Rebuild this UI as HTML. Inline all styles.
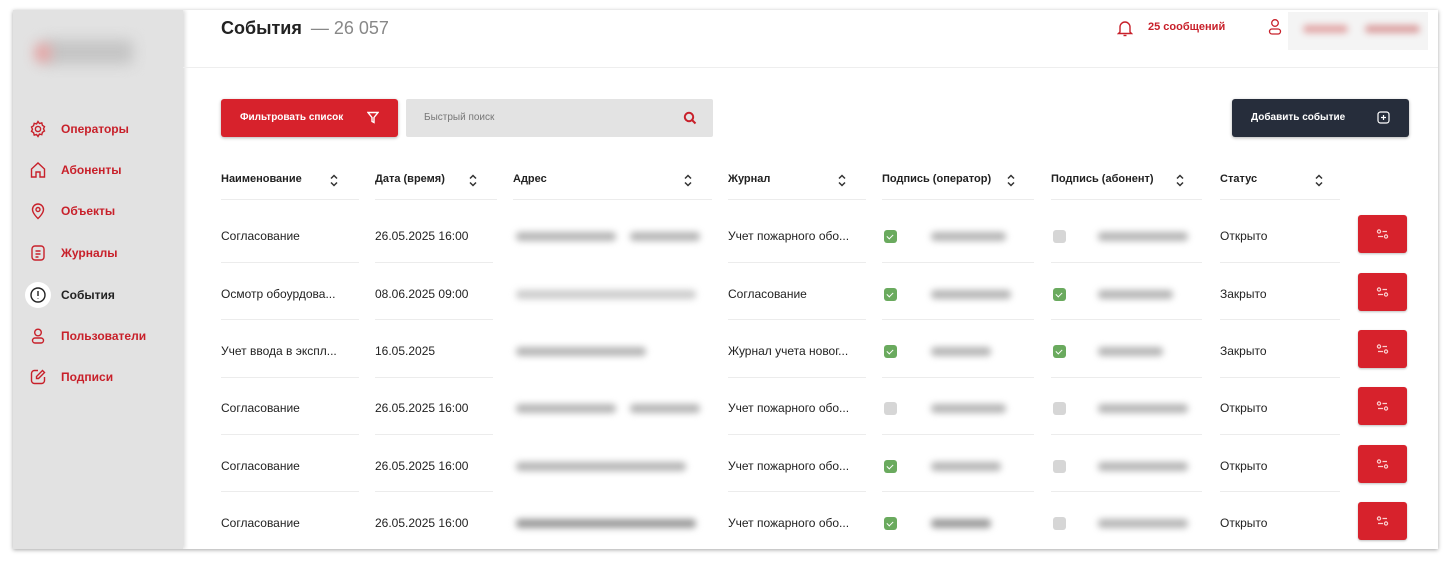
<!DOCTYPE html>
<html><head><meta charset="utf-8"><style>
*{margin:0;padding:0;box-sizing:border-box}
body{width:1453px;height:564px;background:#fff;font-family:"Liberation Sans","Noto Sans CJK SC",sans-serif;position:relative;overflow:hidden;color:#222}
.frame{position:absolute;left:13px;top:10px;width:1425px;height:539px;background:#fff;box-shadow:0 1px 4px rgba(0,0,0,.35);overflow:hidden}
.side{position:absolute;left:0;top:0;width:170px;height:539px;background:#e2e2e2;box-shadow:2px 0 4px rgba(0,0,0,.15)}
.a{position:absolute}
.blur{position:absolute;background:#b5b5b5;filter:blur(3.5px);border-radius:4px;height:9px}
.nav{position:absolute;left:16px;font-size:12px;font-weight:bold;color:#c8202a;display:flex;align-items:center}
.nav svg{width:18px;height:18px;margin-right:14px}
.th{position:absolute;top:163px;font-size:11px;font-weight:bold;color:#222;border-bottom:1.5px solid #ececec;height:27px;}
.td{position:absolute;font-size:12px;color:#222;white-space:nowrap}
.ln{position:absolute;height:1px;background:#ececec}
.cb{position:absolute;width:13px;height:13px;border-radius:3px}
.g{background:#6aaa5e}.x{background:#d6d6d6}
.g:after{content:"";position:absolute;left:4px;top:2.5px;width:3px;height:5px;border:solid #fff;border-width:0 1.5px 1.5px 0;transform:rotate(45deg)}
.btn{position:absolute;left:1345px;width:49px;height:38px;background:#d7222c;border-radius:3px;box-shadow:0 1px 2px rgba(0,0,0,.25)}
</style></head><body>
<div class="frame">
<div class="side">
<div class="blur" style="left:30px;top:30px;width:90px;height:24px;background:#c4c4c4;filter:blur(7px)"></div>
<div class="blur" style="left:22px;top:34px;width:16px;height:18px;background:#e6a5a5;filter:blur(6px)"></div>
<div class="nav" style="top:110px"><svg viewBox="0 0 18 18" fill="none" stroke="#c8202a" stroke-width="1.4"><circle cx="9" cy="9" r="2.6"/><path d="M9 1.5l1.4 2 2.4-.6.6 2.4 2.1 1.3-1 2.2 1 2.2-2.1 1.3-.6 2.4-2.4-.6L9 16.5l-1.4-2-2.4.6-.6-2.4-2.1-1.3 1-2.2-1-2.2 2.1-1.3.6-2.4 2.4.6z"/></svg>Операторы</div>
<div class="nav" style="top:151px"><svg viewBox="0 0 18 18" fill="none" stroke="#c8202a" stroke-width="1.4"><path d="M2.5 16V8L9 2l6.5 6v8h-4.5v-5h-4v5z"/></svg>Абоненты</div>
<div class="nav" style="top:192px"><svg viewBox="0 0 18 18" fill="none" stroke="#c8202a" stroke-width="1.4"><path d="M9 16.5s-5.5-5-5.5-9a5.5 5.5 0 0111 0c0 4-5.5 9-5.5 9z"/><circle cx="9" cy="7.5" r="2"/></svg>Объекты</div>
<div class="nav" style="top:234px"><svg viewBox="0 0 18 18" fill="none" stroke="#c8202a" stroke-width="1.4"><rect x="3" y="2" width="12" height="14" rx="3"/><path d="M6.5 7h5M6.5 10h5M6.5 13h3"/></svg>Журналы</div>
<div style="position:absolute;left:12px;top:272px;width:26px;height:26px;border-radius:50%;background:#fff"></div>
<div class="nav" style="top:276px;color:#222"><svg viewBox="0 0 18 18" fill="none" stroke="#222" stroke-width="1.4"><circle cx="9" cy="9" r="7"/><path d="M9 5v5M9 12.2v.6"/></svg>События</div>
<div class="nav" style="top:317px"><svg viewBox="0 0 18 18" fill="none" stroke="#c8202a" stroke-width="1.4"><circle cx="9" cy="5.5" r="3.3"/><rect x="3.5" y="11" width="11" height="5" rx="2.5"/></svg>Пользователи</div>
<div class="nav" style="top:358px"><svg viewBox="0 0 18 18" fill="none" stroke="#c8202a" stroke-width="1.4"><path d="M9 2.5H5.5a3 3 0 00-3 3v7a3 3 0 003 3h7a3 3 0 003-3V9"/><path d="M13.5 2.5l2 2-6 6H7.5v-2z"/></svg>Подписи</div>
</div>

<div class="a" style="left:208px;top:8px;font-size:18px;font-weight:bold;color:#222">События <span style="font-weight:normal;color:#888;margin-left:4px">— 26 057</span></div>
<svg class="a" style="left:1104px;top:9px" width="16" height="18" viewBox="0 0 16 18" fill="none" stroke="#c8202a" stroke-width="1.4"><path d="M3 13V8a5 5 0 0110 0v5l1.5 1.5h-13z"/><path d="M6.5 16.5h3"/></svg>
<div class="a" style="left:1135px;top:11px;font-size:11px;font-weight:bold;color:#c8202a">25 сообщений</div>
<svg class="a" style="left:1255px;top:8px" width="14" height="18" viewBox="0 0 14 18" fill="none" stroke="#c8202a" stroke-width="1.3"><circle cx="7" cy="5" r="3.3"/><rect x="1.5" y="11" width="11" height="5" rx="2.5"/></svg>
<div class="a" style="left:1275px;top:2px;width:140px;height:38px;background:#f4f4f4"></div>
<div class="blur" style="left:1290px;top:15px;width:45px;height:8px;background:#e2a7a7"></div>
<div class="blur" style="left:1352px;top:15px;width:55px;height:8px;background:#dba0a0"></div>
<div class="a" style="left:170px;top:57px;width:1255px;height:1px;background:#eee"></div>

<div class="a" style="left:208px;top:89px;width:177px;height:38px;background:#d7222c;border-radius:3px;box-shadow:0 1px 3px rgba(0,0,0,.3);color:#fff;font-size:10px;font-weight:bold;padding:13px 0 0 19px">Фильтровать список
<svg style="position:absolute;left:146px;top:12px" width="12" height="13" viewBox="0 0 12 13" fill="none" stroke="#fff" stroke-width="1.4"><path d="M1 1.5h10L7 6.5v5L5 10.5v-4z"/></svg></div>
<div class="a" style="left:393px;top:89px;width:307px;height:38px;background:#e3e3e3;border-radius:2px;font-size:10px;color:#777;padding:13px 0 0 18px">Быстрый поиск
<svg style="position:absolute;left:277px;top:12px" width="14" height="14" viewBox="0 0 14 14" fill="none" stroke="#c8202a" stroke-width="2"><circle cx="6" cy="6" r="4.2"/><path d="M9 9l3.5 3.5"/></svg></div>
<div class="a" style="left:1219px;top:89px;width:177px;height:38px;background:#262d3b;border-radius:3px;box-shadow:0 1px 3px rgba(0,0,0,.3);color:#fff;font-size:10px;font-weight:bold;padding:13px 0 0 19px">Добавить событие
<svg style="position:absolute;left:145px;top:12px" width="13" height="13" viewBox="0 0 13 13" fill="none" stroke="#fff" stroke-width="1.2"><rect x="1" y="1" width="11" height="11" rx="2.5"/><path d="M6.5 4v5M4 6.5h5"/></svg></div>

<div class="th" style="left:208px;width:138px">Наименование</div>
<div class="th" style="left:362px;width:122px">Дата (время)</div>
<div class="th" style="left:500px;width:199px">Адрес</div>
<div class="th" style="left:715px;width:138px">Журнал</div>
<div class="th" style="left:869px;width:152px">Подпись (оператор)</div>
<div class="th" style="left:1038px;width:151px">Подпись (абонент)</div>
<div class="th" style="left:1207px;width:120px">Статус</div>
<svg class="a" style="left:317px;top:164px" width="8" height="13" viewBox="0 0 8 13" fill="none" stroke="#333" stroke-width="1.5"><path d="M1 4.5l3-3 3 3M1 8.5l3 3 3-3"/></svg>
<svg class="a" style="left:456px;top:164px" width="8" height="13" viewBox="0 0 8 13" fill="none" stroke="#333" stroke-width="1.5"><path d="M1 4.5l3-3 3 3M1 8.5l3 3 3-3"/></svg>
<svg class="a" style="left:671px;top:164px" width="8" height="13" viewBox="0 0 8 13" fill="none" stroke="#333" stroke-width="1.5"><path d="M1 4.5l3-3 3 3M1 8.5l3 3 3-3"/></svg>
<svg class="a" style="left:825px;top:164px" width="8" height="13" viewBox="0 0 8 13" fill="none" stroke="#333" stroke-width="1.5"><path d="M1 4.5l3-3 3 3M1 8.5l3 3 3-3"/></svg>
<svg class="a" style="left:994px;top:164px" width="8" height="13" viewBox="0 0 8 13" fill="none" stroke="#333" stroke-width="1.5"><path d="M1 4.5l3-3 3 3M1 8.5l3 3 3-3"/></svg>
<svg class="a" style="left:1163px;top:164px" width="8" height="13" viewBox="0 0 8 13" fill="none" stroke="#333" stroke-width="1.5"><path d="M1 4.5l3-3 3 3M1 8.5l3 3 3-3"/></svg>
<svg class="a" style="left:1302px;top:164px" width="8" height="13" viewBox="0 0 8 13" fill="none" stroke="#333" stroke-width="1.5"><path d="M1 4.5l3-3 3 3M1 8.5l3 3 3-3"/></svg>

<div class="td" style="left:208px;top:219px">Согласование</div><div class="td" style="left:362px;top:219px">26.05.2025 16:00</div>
<div class="blur" style="left:503px;top:222px;width:100px"></div><div class="blur" style="left:617px;top:222px;width:70px"></div>
<div class="td" style="left:715px;top:219px">Учет пожарного обо...</div>
<div class="cb g" style="left:871px;top:220px"></div><div class="blur" style="left:918px;top:222px;width:75px"></div>
<div class="cb x" style="left:1040px;top:220px"></div><div class="blur" style="left:1085px;top:222px;width:90px"></div>
<div class="td" style="left:1207px;top:219px">Открыто</div>

<div class="td" style="left:208px;top:277px">Осмотр обоурдова...</div><div class="td" style="left:362px;top:277px">08.06.2025 09:00</div>
<div class="blur" style="left:503px;top:280px;width:180px;background:#ccc"></div>
<div class="td" style="left:715px;top:277px">Согласование</div>
<div class="cb g" style="left:871px;top:278px"></div><div class="blur" style="left:918px;top:280px;width:80px"></div>
<div class="cb g" style="left:1040px;top:278px"></div><div class="blur" style="left:1085px;top:280px;width:75px"></div>
<div class="td" style="left:1207px;top:277px">Закрыто</div>

<div class="td" style="left:208px;top:334px">Учет ввода в экспл...</div><div class="td" style="left:362px;top:334px">16.05.2025</div>
<div class="blur" style="left:503px;top:337px;width:130px"></div>
<div class="td" style="left:715px;top:334px">Журнал учета новог...</div>
<div class="cb g" style="left:871px;top:335px"></div><div class="blur" style="left:918px;top:337px;width:60px"></div>
<div class="cb g" style="left:1040px;top:335px"></div><div class="blur" style="left:1085px;top:337px;width:65px"></div>
<div class="td" style="left:1207px;top:334px">Закрыто</div>

<div class="td" style="left:208px;top:391px">Согласование</div><div class="td" style="left:362px;top:391px">26.05.2025 16:00</div>
<div class="blur" style="left:503px;top:394px;width:100px"></div><div class="blur" style="left:617px;top:394px;width:70px"></div>
<div class="td" style="left:715px;top:391px">Учет пожарного обо...</div>
<div class="cb x" style="left:871px;top:392px"></div><div class="blur" style="left:918px;top:394px;width:75px"></div>
<div class="cb x" style="left:1040px;top:392px"></div><div class="blur" style="left:1085px;top:394px;width:90px"></div>
<div class="td" style="left:1207px;top:391px">Открыто</div>

<div class="td" style="left:208px;top:449px">Согласование</div><div class="td" style="left:362px;top:449px">26.05.2025 16:00</div>
<div class="blur" style="left:503px;top:452px;width:170px"></div>
<div class="td" style="left:715px;top:449px">Учет пожарного обо...</div>
<div class="cb g" style="left:871px;top:450px"></div><div class="blur" style="left:918px;top:452px;width:70px"></div>
<div class="cb x" style="left:1040px;top:450px"></div><div class="blur" style="left:1085px;top:452px;width:90px"></div>
<div class="td" style="left:1207px;top:449px">Открыто</div>

<div class="td" style="left:208px;top:506px">Согласование</div><div class="td" style="left:362px;top:506px">26.05.2025 16:00</div>
<div class="blur" style="left:503px;top:509px;width:180px;background:#999"></div>
<div class="td" style="left:715px;top:506px">Учет пожарного обо...</div>
<div class="cb g" style="left:871px;top:507px"></div><div class="blur" style="left:918px;top:509px;width:60px;background:#999"></div>
<div class="cb x" style="left:1040px;top:507px"></div><div class="blur" style="left:1085px;top:509px;width:90px"></div>
<div class="td" style="left:1207px;top:506px">Открыто</div>

<div class="ln" style="left:208px;top:252px;width:138px"></div><div class="ln" style="left:362px;top:252px;width:118px"></div><div class="ln" style="left:715px;top:252px;width:138px"></div><div class="ln" style="left:869px;top:252px;width:152px"></div><div class="ln" style="left:1038px;top:252px;width:151px"></div><div class="ln" style="left:1207px;top:252px;width:120px"></div>
<div class="ln" style="left:208px;top:309px;width:138px"></div><div class="ln" style="left:362px;top:309px;width:118px"></div><div class="ln" style="left:715px;top:309px;width:138px"></div><div class="ln" style="left:869px;top:309px;width:152px"></div><div class="ln" style="left:1038px;top:309px;width:151px"></div><div class="ln" style="left:1207px;top:309px;width:120px"></div>
<div class="ln" style="left:208px;top:367px;width:138px"></div><div class="ln" style="left:362px;top:367px;width:118px"></div><div class="ln" style="left:715px;top:367px;width:138px"></div><div class="ln" style="left:869px;top:367px;width:152px"></div><div class="ln" style="left:1038px;top:367px;width:151px"></div><div class="ln" style="left:1207px;top:367px;width:120px"></div>
<div class="ln" style="left:208px;top:424px;width:138px"></div><div class="ln" style="left:362px;top:424px;width:118px"></div><div class="ln" style="left:715px;top:424px;width:138px"></div><div class="ln" style="left:869px;top:424px;width:152px"></div><div class="ln" style="left:1038px;top:424px;width:151px"></div><div class="ln" style="left:1207px;top:424px;width:120px"></div>
<div class="ln" style="left:208px;top:481px;width:138px"></div><div class="ln" style="left:362px;top:481px;width:118px"></div><div class="ln" style="left:715px;top:481px;width:138px"></div><div class="ln" style="left:869px;top:481px;width:152px"></div><div class="ln" style="left:1038px;top:481px;width:151px"></div><div class="ln" style="left:1207px;top:481px;width:120px"></div>

<div class="btn" style="top:205px"></div><div class="btn" style="top:263px"></div><div class="btn" style="top:320px"></div><div class="btn" style="top:377px"></div><div class="btn" style="top:435px"></div><div class="btn" style="top:492px"></div>
<svg class="a" style="left:1363px;top:219px" width="14" height="310" viewBox="0 0 14 310" fill="none" stroke="#fbd0d0" stroke-width="1.2">
<g id="i"><circle cx="3" cy="2.5" r="1.6"/><path d="M6.5 2.5h4.5M2 7.5h5"/><circle cx="10" cy="7.5" r="1.6"/></g>
<use href="#i" y="58"/><use href="#i" y="115"/><use href="#i" y="172"/><use href="#i" y="230"/><use href="#i" y="287"/>
</svg>
</div>
</body></html>
